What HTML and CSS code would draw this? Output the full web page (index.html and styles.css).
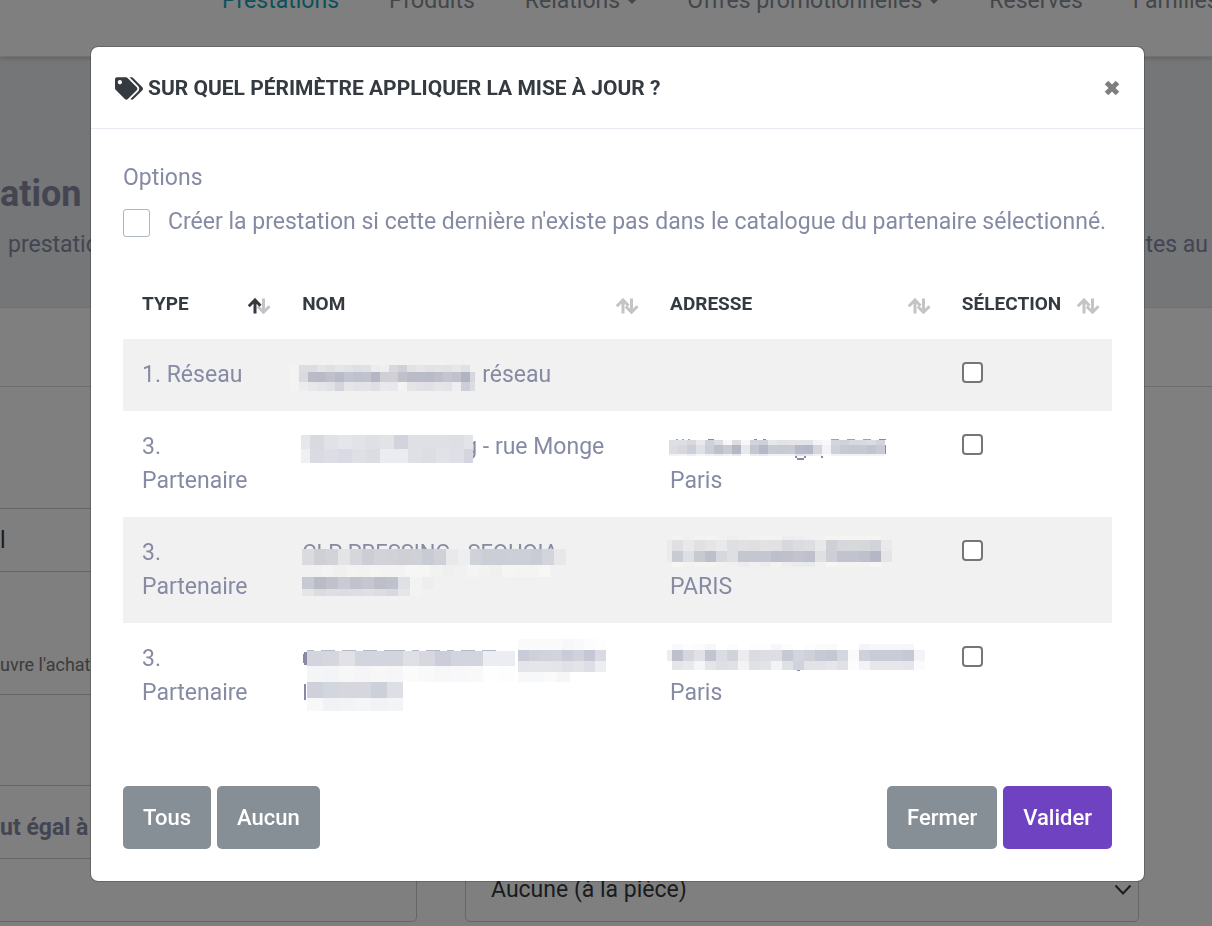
FILE: index.html
```html
<!DOCTYPE html>
<html lang="fr">
<head>
<meta charset="utf-8">
<meta name="viewport" content="width=device-width, initial-scale=1">
<title>Prestations</title>
<link rel="stylesheet" href="styles.css">
</head>
<body>
<div class="page">
  <nav class="topnav">
    <a class="active" href="#">Prestations</a>
    <a href="#">Produits</a>
    <a class="has-menu" href="#">Relations</a>
    <a class="has-menu" href="#">Offres promotionnelles</a>
    <a href="#">Réservés</a>
    <a href="#">Familles</a>
  </nav>
  <header class="hero">
    <h1>ation</h1>
    <p><span>prestatio</span><span>utes au</span></p>
  </header>
  <main>
    <div class="card-head"></div>
    <div class="field-row"><input class="field" aria-label="Nom" value="l"></div>
    <p class="hint">uvre l'achat</p>
    <div class="spacer"></div>
    <h2 class="panel-title">ut égal à</h2>
    <div class="pair">
      <input class="field field-left" aria-label="Valeur">
      <div class="select-wrap">
        <select class="field" aria-label="Unité"><option>Aucune (à la pièce)</option></select>
        <svg class="chevron" viewBox="0 0 18 12" aria-hidden="true"><path d="M1.5 1.5 9 9.500 16.500 1.500" fill="none" stroke="#343a40" stroke-width="2"/></svg>
      </div>
    </div>
  </main>
</div>

<div class="backdrop">
  <section class="modal" role="dialog" aria-labelledby="modal-title">
    <header class="modal-head">
      <svg class="tags" viewBox="0 0 640 512" aria-hidden="true"><path fill="currentColor" d="M497.941 225.941 286.059 14.059A48 48 0 0 0 252.118 0H48C21.490 0 0 21.490 0 48v204.118a48 48 0 0 0 14.059 33.941l211.882 211.882c18.744 18.745 49.136 18.746 67.882 0l204.118-204.118c18.745-18.745 18.745-49.137 0-67.882zM112 160c-26.510 0-48-21.490-48-48s21.490-48 48-48 48 21.490 48 48-21.490 48-48 48zm513.941 133.823L421.823 497.941c-18.745 18.745-49.137 18.745-67.882 0l-.36-.36L527.640 323.522c16.999-16.999 26.360-39.600 26.360-63.640s-9.362-46.641-26.360-63.640L331.397 0h48.721a48 48 0 0 1 33.941 14.059l211.882 211.882c18.745 18.745 18.745 49.137 0 67.882z"/></svg>
      <h2 id="modal-title">SUR QUEL PÉRIMÈTRE APPLIQUER LA MISE À JOUR ?</h2>
      <button class="close" type="button" aria-label="Fermer la fenêtre">
        <svg viewBox="0 0 16 16" aria-hidden="true"><path d="M2.500 2.500 13.500 13.500M13.500 2.500 2.500 13.500" stroke="currentColor" stroke-width="5" fill="none"/></svg>
      </button>
    </header>
    <div class="modal-body">
      <p class="legend">Options</p>
      <label class="option"><input type="checkbox" class="check-lg"><span>Créer la prestation si cette dernière n'existe pas dans le catalogue du partenaire sélectionné.</span></label>
      <table>
        <colgroup><col class="c-type"><col class="c-nom"><col class="c-adr"><col class="c-sel"></colgroup>
        <thead>
          <tr>
            <th scope="col"><div class="th">TYPE <svg class="sort sorted" viewBox="0 0 24 16"><path class="down" d="M16.500 .5V13.500M10.800 8.500 16.500 14.200 22.500 8.200"/><path class="up" d="M8 15.500V2.500M1.800 8.200 8 2l5.500 5.800"/></svg></div></th>
            <th scope="col"><div class="th">NOM <svg class="sort" viewBox="0 0 24 16"><path class="down" d="M16.500 .5V13.500M10.800 8.500 16.500 14.200 22.500 8.200"/><path class="up" d="M8 15.500V2.500M1.800 8.200 8 2l5.500 5.800"/></svg></div></th>
            <th scope="col"><div class="th">ADRESSE <svg class="sort" viewBox="0 0 24 16"><path class="down" d="M16.500 .5V13.500M10.800 8.500 16.500 14.200 22.500 8.200"/><path class="up" d="M8 15.500V2.500M1.800 8.200 8 2l5.500 5.800"/></svg></div></th>
            <th scope="col"><div class="th">SÉLECTION <svg class="sort" viewBox="0 0 24 16"><path class="down" d="M16.500 .5V13.500M10.800 8.500 16.500 14.200 22.500 8.200"/><path class="up" d="M8 15.500V2.500M1.800 8.200 8 2l5.500 5.800"/></svg></div></th>
          </tr>
        </thead>
        <tbody>
          <tr>
            <td>1. Réseau</td>
            <td><div class="line"><svg class="mosaic w-180" data-mosaic="nom1"></svg>réseau</div></td>
            <td></td>
            <td><input type="checkbox" class="check" aria-label="Sélectionner le réseau"></td>
          </tr>
          <tr>
            <td>3. Partenaire</td>
            <td><div class="line"><svg class="mosaic w-162" data-mosaic="nom2"></svg>g - rue Monge</div></td>
            <td><div class="line"><svg class="mosaic w-162" data-mosaic="adr2"></svg></div>Paris</td>
            <td><input type="checkbox" class="check" aria-label="Sélectionner le partenaire 1"></td>
          </tr>
          <tr>
            <td>3. Partenaire</td>
            <td><div class="covered">CLP PRESSING - SEQUOIA<svg class="mosaic over" data-mosaic="nom3"></svg></div></td>
            <td><div class="line"><svg class="mosaic w-162" data-mosaic="adr3"></svg></div>PARIS</td>
            <td><input type="checkbox" class="check" aria-label="Sélectionner le partenaire 2"></td>
          </tr>
          <tr>
            <td>3. Partenaire</td>
            <td><div class="line"><svg class="mosaic w-162" data-mosaic="nom4"></svg></div></td>
            <td><div class="line"><svg class="mosaic w-162" data-mosaic="adr4"></svg></div>Paris</td>
            <td><input type="checkbox" class="check" aria-label="Sélectionner le partenaire 3"></td>
          </tr>
        </tbody>
      </table>
    </div>
    <footer class="modal-foot">
      <div class="group"><button class="btn" type="button">Tous</button><button class="btn" type="button">Aucun</button></div>
      <div class="group"><button class="btn" type="button">Fermer</button><button class="btn primary" type="button">Valider</button></div>
    </footer>
  </section>
</div>
<script src="mosaic.js"></script>
</body>
</html>
```

FILE: styles.css
```css
* { box-sizing: border-box; }
body {
  margin: 0;
  height: 100vh;
  overflow: hidden;
  background: #fff;
  color: #868ba3;
  font-family: Roboto, "Noto Sans", sans-serif;
  font-size: 23px;
  line-height: 34px;
}
h1, h2, p { margin: 0; }
button, input, select { font: inherit; }

.page { height: 100vh; overflow: hidden; }
.topnav {
  display: flex;
  gap: 50px;
  height: 73px;
  margin-top: -16px;
  padding-left: 222px;
  border-bottom: 1px solid #e4e4e4;
  box-shadow: 0 2px 4px rgba(0, 0, 0, .15);
  position: relative;
  white-space: nowrap;
}
.topnav a { color: #868e96; text-decoration: none; }
.topnav .active { color: #17a2b8; }
.has-menu { display: flex; align-items: center; gap: 7px; height: 34px; }
.has-menu::after {
  content: "";
  border: 5px solid transparent;
  border-top-color: currentColor;
  border-bottom: 0;
}
.hero {
  height: 251px;
  padding: 112px 4px 0 0;
  background: #e9ecf0;
  border-bottom: 1px solid #dcdfe3;
}
.hero h1 { font-size: 36px; line-height: 50px; }
.hero p { display: flex; justify-content: space-between; padding: 9px 0 0 8px; }

.card-head { height: 79px; border-bottom: 1px solid #d8d8d8; }
.field-row { padding-top: 121px; width: 34%; }
.field {
  display: block;
  width: 100%;
  height: 64px;
  padding: 0 25px;
  border: 1px solid #cdcdcd;
  border-radius: 5px;
  background: #fff;
  color: #343a40;
  appearance: none;
}
.field-row .field { padding: 0; border-left: 0; border-radius: 0 5px 5px 0; }
.hint {
  height: 123px;
  padding-top: 76px;
  width: 34%;
  font-size: 18px;
  color: #777;
  border-bottom: 1px solid #cdcdcd;
}
.spacer { width: 34%; height: 91px; border-bottom: 1px solid #cdcdcd; }
.panel-title { height: 72px; padding-top: 25px; font-size: 23px; }
.pair { display: flex; gap: 48px; padding-right: 73px; }
.field-left { width: 417px; flex: none; border-left: 0; border-radius: 0 5px 5px 0; }
.select-wrap { position: relative; flex: 1; }
.chevron { position: absolute; right: 7px; top: 26px; width: 18px; height: 12px; }

.backdrop {
  position: fixed;
  inset: 0;
  padding: 46px 67px 0 90px;
  background: rgba(0, 0, 0, .5);
}
.modal {
  background: #fff;
  background-clip: padding-box;
  border: 1px solid rgba(0, 0, 0, .2);
  border-radius: 8px;
}
.modal-head {
  display: flex;
  align-items: center;
  padding: 24px 24px 23px;
  border-bottom: 1px solid #e9e9f1;
  color: #343a40;
}
.modal-head h2 { flex: 1; font-size: 21px; font-weight: 700; white-space: nowrap; }
.tags { width: 28px; height: 23px; margin-right: 5px; }
.close { display: flex; padding: 0; border: 0; background: none; color: #7f7f7f; }
.close svg { width: 16px; height: 16px; }
.modal-body { padding: 32px 32px 0; }
.option { display: flex; align-items: center; height: 56px; white-space: nowrap; }
.option span { height: 36px; }
.check-lg, .check {
  appearance: none;
  margin: 0;
  background: #fff;
  border: 1px solid #adb5bd;
  border-radius: 3px;
}
.check-lg { flex: none; width: 27px; height: 28px; margin-right: 18px; }
.check { display: block; width: 21px; height: 21px; margin-top: 4px; border-color: #767676; border-width: 2px; border-radius: 4px; }
.check:checked, .check-lg:checked { background: #6f42c1; }

table { width: 100%; margin-top: 18px; border-collapse: collapse; table-layout: fixed; }
.c-type { width: 16.2%; }
.c-nom { width: 37.2%; }
.c-adr { width: 29.5%; }
.c-sel { width: 17.1%; }
th { height: 70px; padding: 0 12px 0 19px; text-align: left; font-size: 19px; color: #343a40; }
.th { display: flex; align-items: center; justify-content: space-between; }
.sort { width: 24px; height: 16px; margin-top: 4px; fill: none; stroke: #c4c4c6; stroke-width: 3; }
.sorted .up { stroke: #343a40; }
td { padding: 19px; vertical-align: top; }
td:first-child { padding-right: 30px; }
tbody tr:nth-child(odd) { background: #f1f1f1; }
.line { display: flex; height: 34px; white-space: nowrap; }
.covered { position: relative; height: 68px; white-space: nowrap; font-size: 22px; }
.mosaic { flex: none; height: 34px; overflow: visible; position: relative; }
.over { position: absolute; left: 0; top: 0; width: 262px; }
.w-180 { width: 180px; }
.w-162 { width: 162px; }

.modal-foot { display: flex; justify-content: space-between; padding: 57px 32px 32px; }
.group { display: flex; gap: 6px; }
.btn {
  height: 63px;
  padding: 0 20px;
  border: 0;
  border-radius: 5px;
  background: #868e96;
  color: #fff;
  font-size: 22px;
  font-weight: 500;
}
.primary { background: #6f42c1; }
```

FILE: mosaic.js
```js
// Pixelated masks: each strip is [x, y, cell width, height, colours].
const mosaics = {
  nom1: [
    [-12, 7, 8, 26, "f3f3f3"],
    [-3, 7, 9, 7, "dcdde1 dcdde1 e4e4e7 e0e0e3 e4e5e7 e2e3e6 dddfe4 dfe1e5 ececee eeeeee d8d8dd d0d1d8 e2e2e5 e6e6e8 e2e2e4 e3e4e6 e0e2e5 e6e7e9 e0e1e4"],
    [-3, 14, 9, 10, "d9d9de b9bbc8 b8bac7 bec0cc b9bbc8 c2c4cf bfc1cc c0c2cd b4b6c5 cfcfd5 d0d0d6 bec0ca b9bbc8 b9bbc8 b8bac6 bcbec9 c4c5d0 bfc1cc b1b3c2"],
    [168, 14, 5, 10, "d6d7de"],
    [-3, 24, 9, 9, "ececee e8e8ea e4e5e8 e1e2e6 d3d4dc e6e6e9 e2e3e7 e4e4e7 dedfe4 e9e9eb e7e8ec f3f3f3 e4e4e6 e1e1e6 e0e0e5 e5e5e8 e4e4e7 eeeff1 cdcfd8"],
    [168, 24, 5, 9, "dcdde2"]
  ],
  nom2: [
    [-1, 5, 9, 14, "e6e7ea"],
    [8, 5, 14, 14, "d9dae0 e1e2e7 e5e6eb e2e3e7 dfe0e5 e2e3e7 d2d4dd dfe0e5 dfe0e5 dfe0e5 dedfe5"],
    [162, 5, 9, 14, "e3e4e9"],
    [-1, 19, 9, 14, "f0f0f3"],
    [8, 19, 14, 14, "d9dae4 dcdde5 d9dae4 dfe0e6 dcdde3 ebecf1 ebecf1 dfe0e6 dddee4 e1e2e7 dfe0e7"],
    [162, 19, 9, 14, "d3d5df"]
  ],
  nom3: [
    [0, 13, 12, 16, "dadbdf cfd0d6 d2d3d9 e4e4e6 d6d7dc cccdd5 d2d3d8 d1d2d8 cfd0d6 d0d1d7 c8cbd3 d0d1d8 e9e9eb edeeef d0d2da ccced6 cbcdd7 cdcfd6 cdcfd6 c9cbd5 d3d5dc e8e8ea"],
    [20, 29, 12, 12, "f3f3f3 eff0f0 f3f3f1 f2f2f1 f4f4f2 f3f3f2 f3f3f1 f6f6f4 f6f6f4 f2f2f1 eeefef f1f1f1 f4f4f2 f2f2f1 f0f0f0 f5f5f3 f4f4f2 f4f4f3 f7f7f5"],
    [0, 41, 12, 12, "c8cad3 b9bbc7 c1c1cb c9cad4 c0c3cd c5c6cf bcbec8 bfc1cb e0e1e4 f3f3f1 eeeeee"],
    [0, 53, 12, 7, "e5e5e7 dcdce0 dfdfe3 dcdde2 dddee3 dfe0e4 dcdde1 d8d9df e5e6e9 f3f3f1"]
  ],
  nom4: [
    [5, 8, 7, 1, "b5b8c7 ffffff b5b8c7 b5b8c7 ffffff b5b8c7 b5b8c7 ffffff b5b8c7 b5b8c7 ffffff b5b8c7 b5b8c7 b5b8c7 ffffff b5b8c7 ffffff b5b8c7 b5b8c7 ffffff b5b8c7 ffffff b5b8c7 b5b8c7 ffffff b5b8c7 b5b8c7"],
    [1, 12, 1, 9, "868ba3"], [2, 10, 3, 13, "868ba3"], [2, 42, 2, 16, "868ba3"],
    [5, 9, 16, 15, "d3d4de d5d7de e1e1e6 d2d5dd d2d5dd d2d5dd dfe0e5 d7d7e0 cbced8 d2d5de d2d5de ecedf2 ecedf2"],
    [5, 24, 16, 16, "f4f5f7 f3f4f6 f7f7f8 f5f5f7 f7f7f8 f6f6f8 fbfbfb f9f9fa f6f7f9 f8f8fa f9f9fa fefefe fdfdfd"],
    [216, -3, 11, 11, "fafafb fafafa fafafa fafafb f7f7f9 f9f9fb fcfcfd fdfdfe"],
    [216, 8, 11, 11, "c9cbd6 cfd1d9 d1d3db d1d4dc c9ccd6 d0d2db c5c7d5 d9dae4"],
    [216, 19, 11, 11, "e4e5ea e5e6ea e5e6ea e4e5e9 dfe1e6 e3e4e8 dedfe5 edeef3"],
    [216, 30, 13, 10, "f7f8f9 f7f8f9 fafafb f5f6f8"],
    [5, 40, 16, 16, "cfd0da d2d6df d6d7dd d5d6df ccd0d8 dedfe5"],
    [5, 56, 16, 13, "f7f8fa f1f2f4 f2f3f5 f4f5f7 f1f2f4 f3f4f6"]
  ],
  adr2: [
    [6, 9, 2, 1, "9da1b6 ffffff ffffff 9da1b6 ffffff ffffff 9da1b6"],
    [38, 9, 6, 1, "868ba3"], [84, 9, 3, 1, "868ba3"], [93, 9, 3, 1, "868ba3"],
    [161, 9, 8, 1, "9da1b6 ffffff 9da1b6 ffffff 9da1b6"],
    [209, 9, 7, 1, "868ba3"], [214, 15, 2, 9, "868ba3"],
    [125, 26, 2, 2, "868ba3"], [127, 28, 7, 2, "868ba3"], [134, 26, 2, 2, "868ba3"], [151, 25, 2, 3, "868ba3"],
    [-1, 10, 9, 5, "dedfe5 dddee4 d8d9df e9e9ec cfd1da dddee4 f7f7f8 dcdde2 f7f7f8 d2d4dc cfd1da e6e7e9 e2e3e6 e4e4e7 e3e4e7 e3e4e8 f3f3f5 f8f8fa d4d5db d0d2da d8d9df d9dae0 dcdde1 d3d4db"],
    [-1, 15, 9, 9, "dcdde3 d7d8df ccceda dfe0e5 ccced8 bec0cd c9cbd4 b5b7c5 e8e9ed c4c6d0 b5b8c6 c8cad4 c7c9d3 c9cbd4 b7bac8 b5b8c6 d5d5dc f2f3f5 cfd1d8 c8c9d5 c5c7d1 c6c8d3 c2c4d0 c8cad4"],
    [-1, 24, 9, 2, "f2f2f5 f4f4f6 eeeff3 f6f6f8 f2f2f5 ededf1 f2f2f5 e8e9ef fbfbfb ededf1 e8e9ef f2f2f5 f2f2f5 f2f2f5 e1e2e9 e8e9ef f2f2f5 fbfbfb f2f2f5 f2f2f5 f2f2f5 f2f2f5 f2f2f5 f2f2f5"]
  ],
  adr3: [
    [2, 0, 11, 4, "f3f3f3 f0f0f0 f3f3f2 f3f3f2 f1f1f1 eeeeef f1f1f1 f2f2f2 f3f3f2 f3f3f2 eeeeef eeeeef f1f1f1 f2f2f2 f4f4f3 f4f4f3 f4f4f3 f4f4f3 f4f4f3"],
    [-3, 4, 5, 22, "ebebec"],
    [2, 4, 11, 11, "e0e0e3 e9e9eb e1e1e4 e5e5e7 e9e9eb dedfe3 e1e1e4 dfdfe2 e2e2e4 e1e1e4 d7d8dd dbdcdf dddee2 e8e8ea cfd0d6 d6d7db d7d8dc d6d7db d2d3d9 eaeaec"],
    [2, 15, 11, 11, "c9cbd4 dedfe3 c8cad2 bdbfca d7d8dc dedfe3 c5c7d0 c5c7d0 c5c7d0 bdc0cb bec0cb c2c3ce bec0cb dfe0e3 cdced6 c1c3ce c1c3ce bec1cb b5b7c6 e5e5e7"],
    [2, 26, 11, 5, "f6f6f4 f2f2f1 f4f4f3 f4f4f3 f2f2f1 f0f0f0 ececee f0f0f0 ededee f3f3f2 ededee e9eaeb e9eaeb f1f1f1 f6f6f4 f3f3f2 f3f3f2 f3f3f2 f6f6f4"]
  ],
  adr4: [
    [2, 2, 11, 6, "f8f9fa fdfdfd fbfbfc f7f7f9 ffffff fcfcfd ffffff fdfdfd fdfdfd f7f7f9 fcfcfd ffffff fdfdfd fafafb fafafb ffffff ffffff f3f4f7 f7f7f9 f6f7f9 f6f7f9 f5f6f8"],
    [-3, 8, 5, 11, "ededf1"],
    [2, 8, 11, 11, "bec0cd d5d6de e0e1e6 c2c4d1 dbdce2 d1d3da ececef dbdce2 dddee3 dddee3 c6c8d4 d2d5dd cfd1d9 c7c9d4 c5c7d2 d4d7df fafafb cfd1da c9cbd6 c9cbd6 c9cbd6 c6c9d3 f3f4f6"],
    [2, 19, 11, 9, "e5e6ea e8e9ed f5f5f7 e4e5e9 dedfe5 e0e1e6 f3f3f5 e0e1e6 e3e4e8 f3f3f5 e0e1e6 d0d3dd e2e3e8 e2e3e8 e5e6ea e0e1e6 fcfcfd f2f3f5 e6e7eb e6e7eb e6e7eb e5e6eb fbfbfc"],
    [127, 28, 3, 1, "868ba3"]
  ]
};

for (const svg of document.querySelectorAll("[data-mosaic]")) {
  for (const [x, y, w, h, colours] of mosaics[svg.dataset.mosaic]) {
    colours.split(" ").forEach((colour, i) => {
      const rect = document.createElementNS("http://www.w3.org/2000/svg", "rect");
      rect.setAttribute("x", x + i * w);
      rect.setAttribute("y", y);
      rect.setAttribute("width", w);
      rect.setAttribute("height", h);
      rect.setAttribute("fill", "#" + colour);
      svg.append(rect);
    });
  }
}
```
